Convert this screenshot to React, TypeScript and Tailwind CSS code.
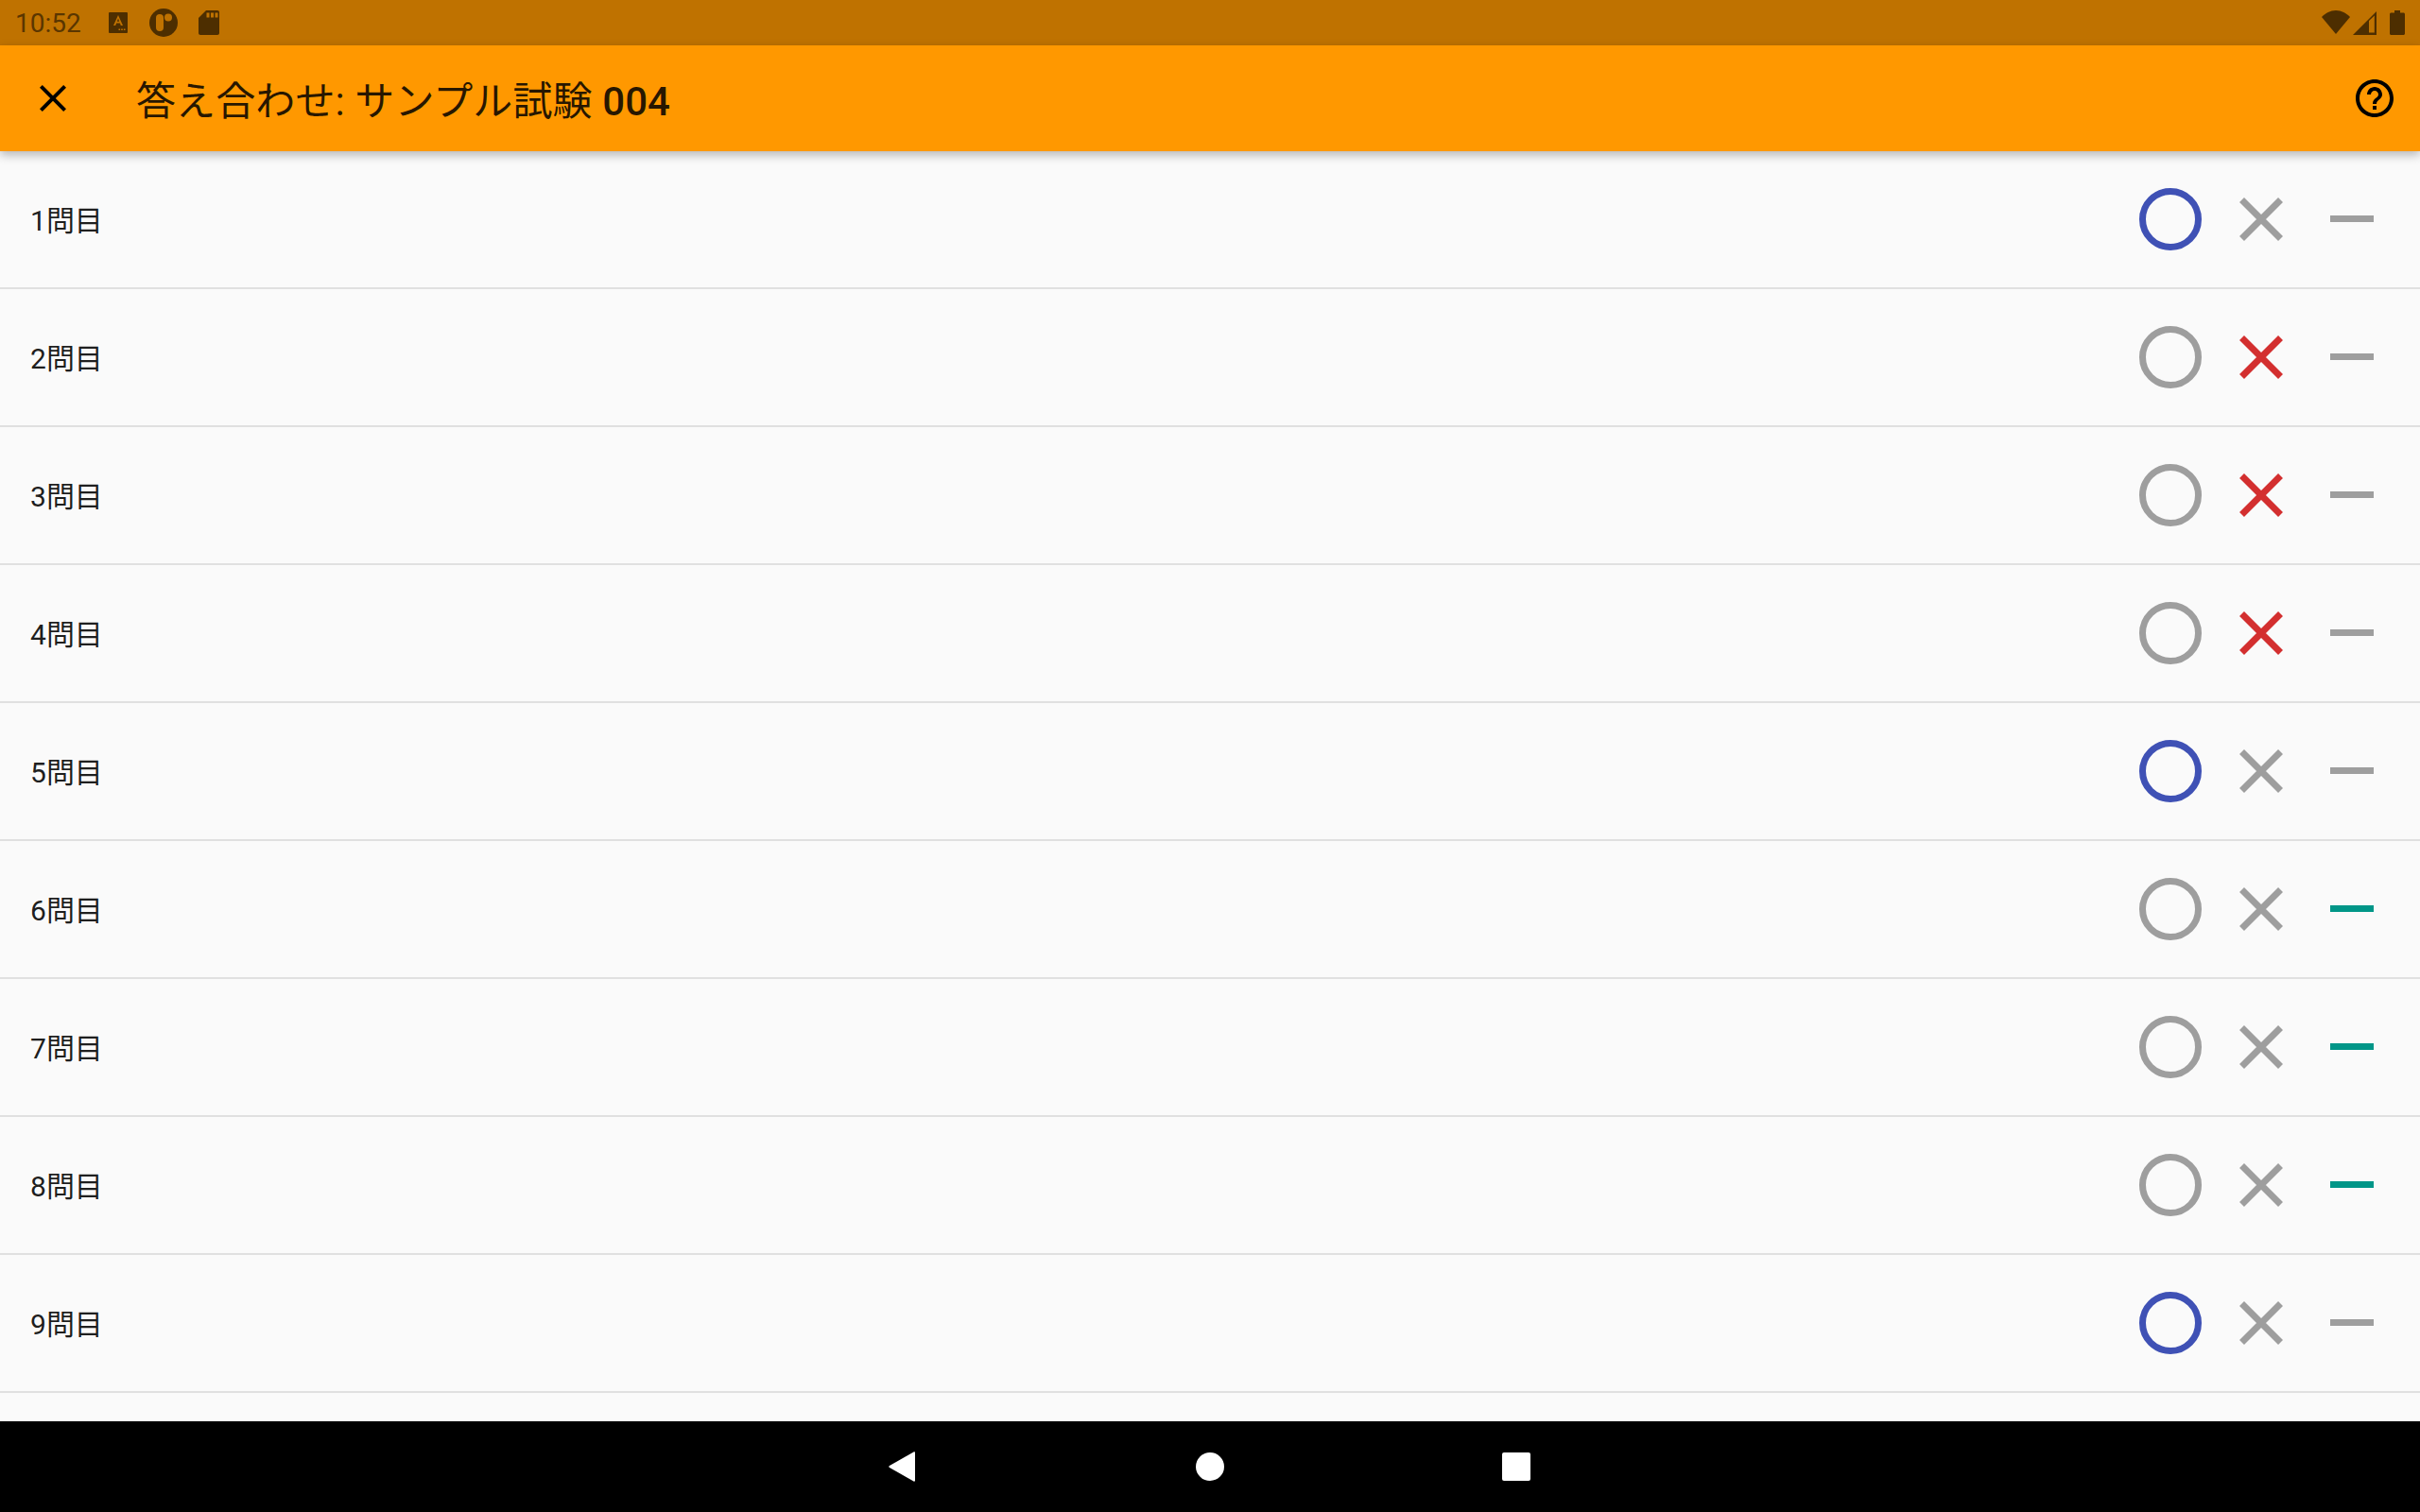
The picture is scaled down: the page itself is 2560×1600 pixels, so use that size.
const rows: ("o" | "x" | "-")[] = ["o", "x", "x", "x", "o", "-", "-", "-", "o"];

function Circle({ on }: { on: boolean }) {
  return (
    <svg width="66" height="66" viewBox="0 0 66 66" fill="none">
      <circle cx="33" cy="33" r="29.5" stroke={on ? "#3f51b5" : "#9e9e9e"} strokeWidth="7" />
    </svg>
  );
}

function Cross({ on }: { on: boolean }) {
  return (
    <svg width="46" height="46" viewBox="0 0 46 46" fill="none">
      <path d="M2.5 2.5L43.5 43.5M43.5 2.5L2.5 43.5" stroke={on ? "#d32f2f" : "#9e9e9e"} strokeWidth="7" />
    </svg>
  );
}

function Row({ n, v }: { n: number; v: "o" | "x" | "-" }) {
  return (
    <div className="flex h-[146px] shrink-0 items-center border-b-2 border-[#e0e0e0] pl-8 pr-6">
      <span className="flex-1 pt-[4px] text-[30px] leading-[40px] text-black/90">{n}問目</span>
      <div className="flex h-24 w-24 items-center justify-center">
        <Circle on={v === "o"} />
      </div>
      <div className="flex h-24 w-24 items-center justify-center">
        <Cross on={v === "x"} />
      </div>
      <div className="flex h-24 w-24 items-center justify-center">
        <div className={v === "-" ? "mb-[1px] h-[7px] w-[46px] bg-[#009688]" : "mb-[1px] h-[7px] w-[46px] bg-[#9e9e9e]"} />
      </div>
    </div>
  );
}

function StatusBar() {
  return (
    <div className="flex h-12 shrink-0 items-center bg-[#bf7200] pl-4 pr-4 text-[#4d2e00]">
      <span className="w-[99px] pt-[2px] text-[28px] leading-[46px] text-[#5a3600]">10:52</span>
      <svg width="20" height="22" viewBox="0 0 20 22">
        <rect width="20" height="22" rx="1" fill="#4d2e00" />
        <path d="M10 3L15 14H12.8L11.9 11.6H8.1L7.2 14H5L10 3ZM8.8 9.8H11.2L10 6.4Z" fill="#bf7200" />
        <path d="M10.5 17.5h1.6v1.6h-1.6zM13.2 17.5h1.6v1.6h-1.6zM15.9 17.5h1.6v1.6h-1.6z" fill="#bf7200" />
      </svg>
      <svg width="30" height="30" viewBox="0 0 30 30" className="ml-[23px]">
        <circle cx="15" cy="15" r="15" fill="#4d2e00" />
        <rect x="7" y="6" width="8" height="18" rx="4" fill="#bf7200" />
        <circle cx="20" cy="9.5" r="4" fill="#bf7200" />
      </svg>
      <svg width="22" height="26" viewBox="0 0 22 26" className="ml-[22px]">
        <path d="M8 0H20C21.1 0 22 .9 22 2V24C22 25.1 21.1 26 20 26H2C.9 26 0 25.1 0 24V8L8 0Z" fill="#4d2e00" />
        <path d="M8.5 2.5h3v5h-3zM13 2.5h3v5h-3zM17.5 2.5h3v5h-3z" fill="#bf7200" />
      </svg>
      <div className="flex-1" />
      <svg width="30" height="25" viewBox="0 0 30 25" className="mb-[1px]">
        <path d="M15 25L0 7C4 3 9 0 15 0S26 3 30 7L15 25Z" fill="#4d2e00" />
      </svg>
      <svg width="25" height="25" viewBox="0 0 25 25" className="ml-[3px] mt-[1px]">
        <path d="M25 0V25H0L25 0ZM22.8 4.5L17 10V22.5H22.8V4.5Z" fill="#4d2e00" fillRule="evenodd" />
      </svg>
      <svg width="16" height="26" viewBox="0 0 16 26" className="ml-[14px]">
        <path d="M5 0H11V2.5H14.5C15.3 2.5 16 3.2 16 4V24.5C16 25.3 15.3 26 14.5 26H1.5C.7 26 0 25.3 0 24.5V4C0 3.2.7 2.5 1.5 2.5H5V0Z" fill="#4d2e00" />
      </svg>
    </div>
  );
}

function AppBar() {
  return (
    <div className="relative z-10 flex h-28 shrink-0 items-center bg-[#ff9800] pl-8 pr-6 shadow-[0_4px_10px_rgba(0,0,0,0.28)]">
      <svg width="48" height="48" viewBox="0 0 24 24" fill="#000000">
        <path d="M19 6.41 17.59 5 12 10.59 6.41 5 5 6.41 10.59 12 5 17.59 6.41 19 12 13.41 17.59 19 19 17.59 13.41 12z" />
      </svg>
      <h1 className="ml-16 flex-1 pt-[7px] text-[42px] leading-[56px] font-normal tracking-[0.1px] text-black/85">
        答え合わせ: サンプル試験 <span className="font-medium">004</span>
      </h1>
      <svg width="48" height="48" viewBox="0 0 24 24" fill="#000000">
        <path d="M11 18h2v-2h-2v2zm1-16C6.48 2 2 6.48 2 12s4.48 10 10 10 10-4.48 10-10S17.52 2 12 2zm0 18c-4.41 0-8-3.59-8-8s3.59-8 8-8 8 3.59 8 8-3.59 8-8 8zm0-14c-2.21 0-4 1.79-4 4h2c0-1.1.9-2 2-2s2 .9 2 2c0 2-3 1.75-3 5h2c0-2.25 3-2.5 3-5 0-2.21-1.79-4-4-4z" />
      </svg>
    </div>
  );
}

function NavBar() {
  return (
    <div className="flex h-24 shrink-0 items-center justify-center gap-[294px] bg-black">
      <svg width="28" height="32" viewBox="0 0 28 32" className="-ml-[1px] mr-[3px]">
        <path d="M26.5 .5C27.5 0 28 .5 28 1.5V30.5C28 31.5 27.5 32 26.5 31.5L1 17C0 16.4 0 15.6 1 15L26.5 .5Z" fill="#ffffff" />
      </svg>
      <div className="h-[30px] w-[30px] rounded-full bg-white" />
      <div className="h-[30px] w-[30px] rounded-[2px] bg-white" />
    </div>
  );
}

export default function App() {
  return (
    <div className="flex h-screen w-full flex-col overflow-hidden bg-[#fafafa] font-['Roboto','Noto_Sans_CJK_JP',sans-serif]">
      <StatusBar />
      <AppBar />
      <div className="flex flex-1 flex-col overflow-hidden">
        {rows.map((v, i) => (
          <Row key={i} n={i + 1} v={v} />
        ))}
      </div>
      <NavBar />
    </div>
  );
}
